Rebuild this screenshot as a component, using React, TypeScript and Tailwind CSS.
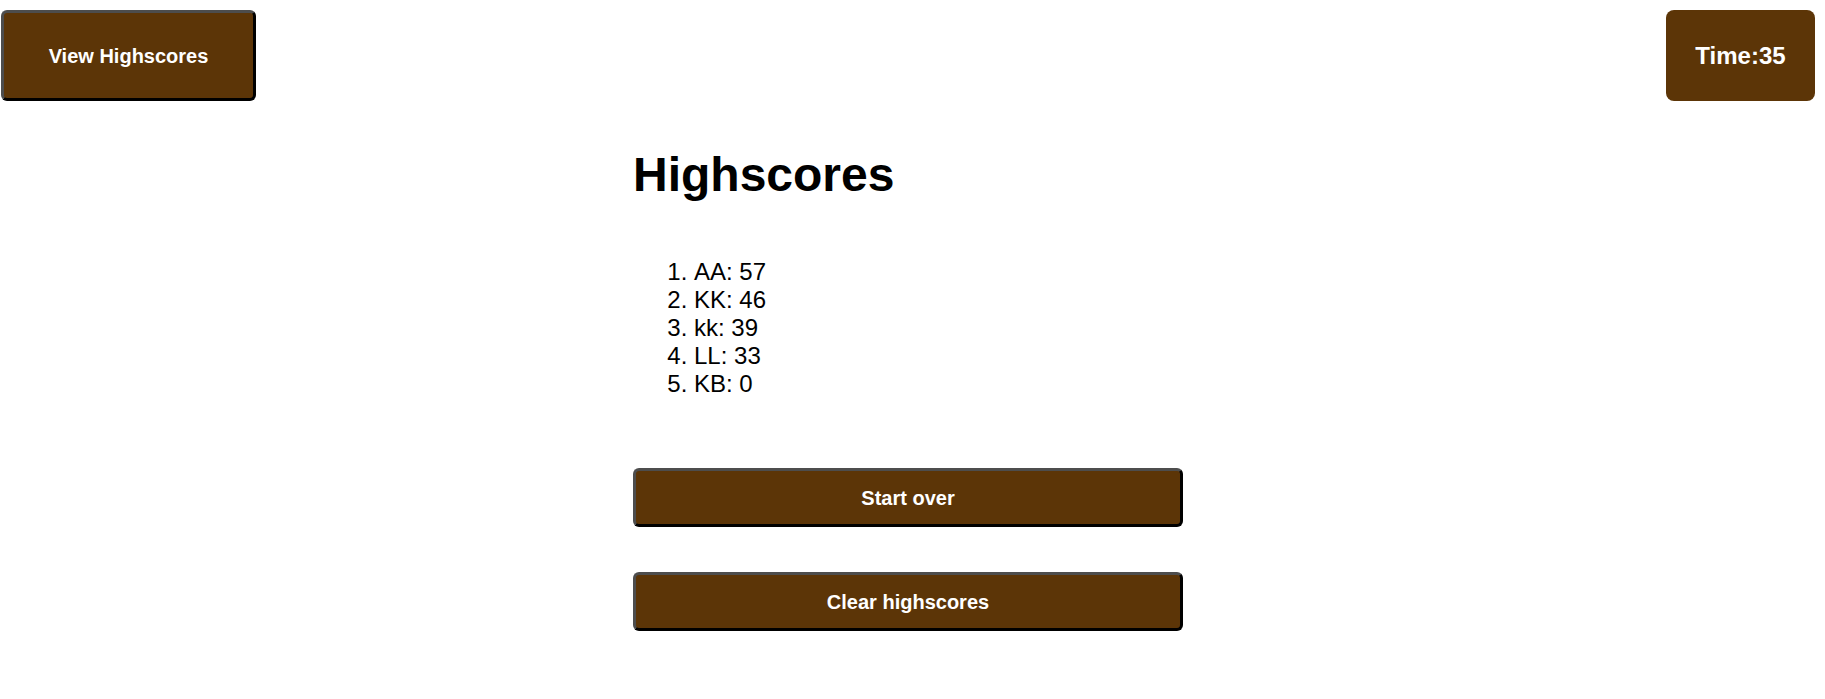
const scores = [
  { name: "AA", score: 57 },
  { name: "KK", score: 46 },
  { name: "kk", score: 39 },
  { name: "LL", score: 33 },
  { name: "KB", score: 0 },
];

export default function App() {
  return (
    <div className="min-h-[699px] bg-white font-['Liberation_Sans',Arial,sans-serif] text-black">
      <header className="flex justify-between items-start pt-[10px] pl-[1px] pr-[10px]">
        <button className="w-[255px] h-[91px] bg-[#5c3507] text-white text-[20px] font-bold rounded-[6px] border-[3px] border-t-[#4d4d4d] border-l-[#4d4d4d] border-b-black border-r-black">
          View Highscores
        </button>
        <div className="w-[149px] h-[91px] bg-[#5c3507] text-white text-[24px] font-bold rounded-[8px] flex items-center justify-center">
          Time:35
        </div>
      </header>

      <main className="pl-[633px] w-[1183px]">
        <h1 className="text-[48px] font-bold leading-[55px] mt-[46px]">Highscores</h1>
        <ol className="list-decimal pl-[61px] mt-[56px] text-[24px] leading-[28px]">
          {scores.map((s) => (
            <li key={s.name}>
              {s.name}: {s.score}
            </li>
          ))}
        </ol>
        <div className="flex flex-col gap-[45px] mt-[70px]">
          <button className="h-[59px] w-full bg-[#5c3507] text-white text-[20px] font-bold rounded-[6px] border-[3px] border-t-[#4d4d4d] border-l-[#4d4d4d] border-b-black border-r-black">
            Start over
          </button>
          <button className="h-[59px] w-full bg-[#5c3507] text-white text-[20px] font-bold rounded-[6px] border-[3px] border-t-[#4d4d4d] border-l-[#4d4d4d] border-b-black border-r-black">
            Clear highscores
          </button>
        </div>
      </main>
    </div>
  );
}
